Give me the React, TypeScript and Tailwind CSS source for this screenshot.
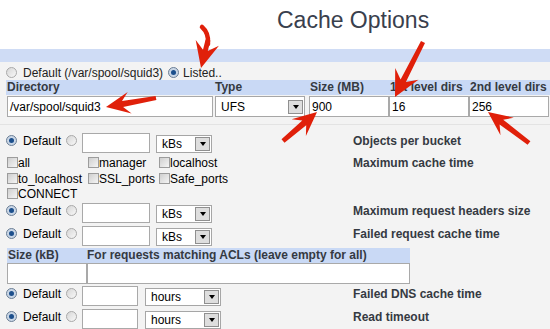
import React from 'react';

function Radio({ on }: { on?: boolean }) {
  return on ? (
    <span className="flex h-[11px] w-[11px] shrink-0 items-center justify-center rounded-full border border-[#6c7f95] bg-[#c9d6e6]">
      <span className="h-[5px] w-[5px] rounded-full bg-[#1c4f8c]" />
    </span>
  ) : (
    <span className="block h-[11px] w-[11px] shrink-0 rounded-full border border-[#a9a9a9] bg-gradient-to-br from-[#d6d6d6] to-[#f8f8f8]" />
  );
}

function Check({ label }: { label: string }) {
  return (
    <div className="flex items-start whitespace-nowrap">
      <span className="mt-[1px] block h-[11px] w-[11px] shrink-0 border border-[#9c9c9c] bg-gradient-to-br from-[#cfcfcf] to-[#f5f5f5]" />
      <span className="leading-[15.5px]">{label}</span>
    </div>
  );
}

function Select({ value, cls }: { value: string; cls: string }) {
  return (
    <div className={`flex items-center justify-between border border-[#a6a6a6] bg-white pl-[5px] pr-[1px] text-[12px] text-black ${cls}`}>
      <span>{value}</span>
      <span className="flex h-[14px] w-[15px] items-center justify-center border border-[#8f8f8f] bg-[#dedede]">
        <span className="h-0 w-0 border-x-[3.5px] border-t-[4px] border-x-transparent border-t-black" />
      </span>
    </div>
  );
}

function Field({ value, cls }: { value?: string; cls: string }) {
  return (
    <div className={`flex items-center border border-[#a9a9a9] bg-white pl-[2px] text-[12px] text-black ${cls}`}>{value}</div>
  );
}

function OptRow({ label, unit, wide }: { label: string; unit: string; wide?: boolean }) {
  return (
    <div className="flex h-[22px] items-start">
      <div className="flex w-[353px] shrink-0 items-start">
        <span className="ml-[6px] mt-[2px]"><Radio on /></span>
        <span className="ml-[6px] mt-[1px] w-[38px] whitespace-nowrap leading-[14px]">Default</span>
        <span className="ml-[5px] mt-[2px]"><Radio /></span>
        <Field cls={wide ? 'ml-[5px] h-[20px] w-[68px]' : 'ml-[5px] h-[20px] w-[56px]'} />
        {wide ? (
          <Select value={unit} cls="ml-[6px] mt-[2px] h-[18px] w-[56px]" />
        ) : (
          <Select value={unit} cls="ml-[7px] mt-[2px] h-[18px] w-[76px]" />
        )}
      </div>
      <span className="mt-[1px] whitespace-nowrap font-bold leading-[14px] text-[#353a42]">{label}</span>
    </div>
  );
}

function arrowPts(x1: number, y1: number, x2: number, y2: number, hl: number, hw: number, w0: number, w1: number) {
  const dx = x2 - x1;
  const dy = y2 - y1;
  const L = Math.hypot(dx, dy);
  const ux = dx / L;
  const uy = dy / L;
  const nx = -uy;
  const ny = ux;
  const bx = x2 - ux * hl;
  const by = y2 - uy * hl;
  const kx = bx + ux * hl * 0.3;
  const ky = by + uy * hl * 0.3;
  const p = (x: number, y: number) => `${x.toFixed(1)},${y.toFixed(1)}`;
  return [
    p(x1 + (nx * w0) / 2, y1 + (ny * w0) / 2),
    p(kx + (nx * w1) / 2, ky + (ny * w1) / 2),
    p(bx + (nx * hw) / 2, by + (ny * hw) / 2),
    p(x2, y2),
    p(bx - (nx * hw) / 2, by - (ny * hw) / 2),
    p(kx - (nx * w1) / 2, ky - (ny * w1) / 2),
    p(x1 - (nx * w0) / 2, y1 - (ny * w0) / 2),
  ].join(' ');
}

export default function App() {
  const red = '#e0200a';
  return (
    <div className="relative h-[329px] w-[550px] overflow-hidden bg-[#f3f3f3] font-['Liberation_Sans',Arial,sans-serif] text-[12px] text-black">
      <div className="h-[49px] bg-white pl-[277px] pt-[6px] text-[23px] leading-[28px] text-[#39404d]">Cache Options</div>
      <div className="h-[13px] bg-[#cfdcf5]" />

      <div className="border-b border-[#e3e3e3] pb-[7px]">
        <div className="flex h-[18px] items-start">
          <span className="ml-[6px] mt-[5px]"><Radio /></span>
          <span className="ml-[6px] mt-[4px] leading-[14px] text-[#222]">Default (/var/spool/squid3)</span>
          <span className="ml-[5px] mt-[5px]"><Radio on /></span>
          <span className="ml-[4px] mt-[4px] leading-[14px] text-[#222]">Listed..</span>
        </div>
        <div className="ml-[6px] grid h-[15px] grid-cols-[208px_94px_80px_80px_1fr] whitespace-nowrap bg-[#c9d9f5] font-bold leading-[15px] text-[#353a42]">
          <span className="pl-[1px]">Directory</span>
          <span className="pl-[1px]">Type</span>
          <span className="pl-[2px]">Size (MB)</span>
          <span className="pl-[2px]">1st level dirs</span>
          <span className="pl-[2px]">2nd level dirs</span>
        </div>
        <div className="ml-[7px] mt-[1px] flex h-[21px]">
          <Field value="/var/spool/squid3" cls="h-[21px] w-[206px]" />
          <Select value="UFS" cls="ml-[2px] h-[21px] w-[90px]" />
          <Field value="900" cls="ml-[4px] h-[21px] w-[80px]" />
          <Field value="16" cls="h-[21px] w-[80px]" />
          <Field value="256" cls="h-[21px] w-[80px]" />
        </div>
      </div>

      <div className="pt-[8px]">
        <OptRow label="Objects per bucket" unit="kBs" wide />
        <div className="mt-[1px] flex h-[47px] items-start">
          <div className="ml-[7px] grid w-[346px] shrink-0 grid-cols-[81px_71px_auto] auto-rows-[15.5px]">
            <Check label="all" />
            <Check label="manager" />
            <Check label="localhost" />
            <Check label="to_localhost" />
            <Check label="SSL_ports" />
            <Check label="Safe_ports" />
            <Check label="CONNECT" />
          </div>
          <span className="whitespace-nowrap font-bold leading-[15.5px] text-[#353a42]">Maximum cache time</span>
        </div>
        <div className="h-[23px]">
          <OptRow label="Maximum request headers size" unit="kBs" wide />
        </div>
        <OptRow label="Failed request cache time" unit="kBs" wide />
        <div className="ml-[7px] w-[403px]">
          <div className="flex h-[15px] whitespace-nowrap bg-[#c9d9f5] font-bold leading-[15px] text-[#353a42]">
            <span className="w-[80px] pl-[1px]">Size (kB)</span>
            <span>For requests matching ACLs (leave empty for all)</span>
          </div>
          <div className="flex h-[21px]">
            <Field cls="h-[21px] w-[80px]" />
            <Field cls="h-[21px] flex-1" />
          </div>
        </div>
        <div className="mt-[2px] h-[23px]">
          <OptRow label="Failed DNS cache time" unit="hours" />
        </div>
        <OptRow label="Read timeout" unit="hours" />
      </div>

      <svg className="pointer-events-none absolute left-0 top-0" width="550" height="329" viewBox="0 0 550 329">
        <path d="M202 27 Q209 33 208 44" fill="none" stroke={red} strokeWidth="4.5" strokeLinecap="round" />
        <polygon points={arrowPts(208, 40, 201, 68, 26, 24, 5, 5)} fill={red} />
        <polygon points={arrowPts(156, 98, 106, 107, 24, 22, 4, 6)} fill={red} />
        <polygon points={arrowPts(283, 141, 317, 112, 24, 22, 4.5, 6)} fill={red} />
        <polygon points={arrowPts(423, 42, 395, 97, 26, 26, 4.5, 6)} fill={red} />
        <polygon points={arrowPts(529, 143, 488, 112, 24, 22, 4.5, 6)} fill={red} />
      </svg>
    </div>
  );
}
